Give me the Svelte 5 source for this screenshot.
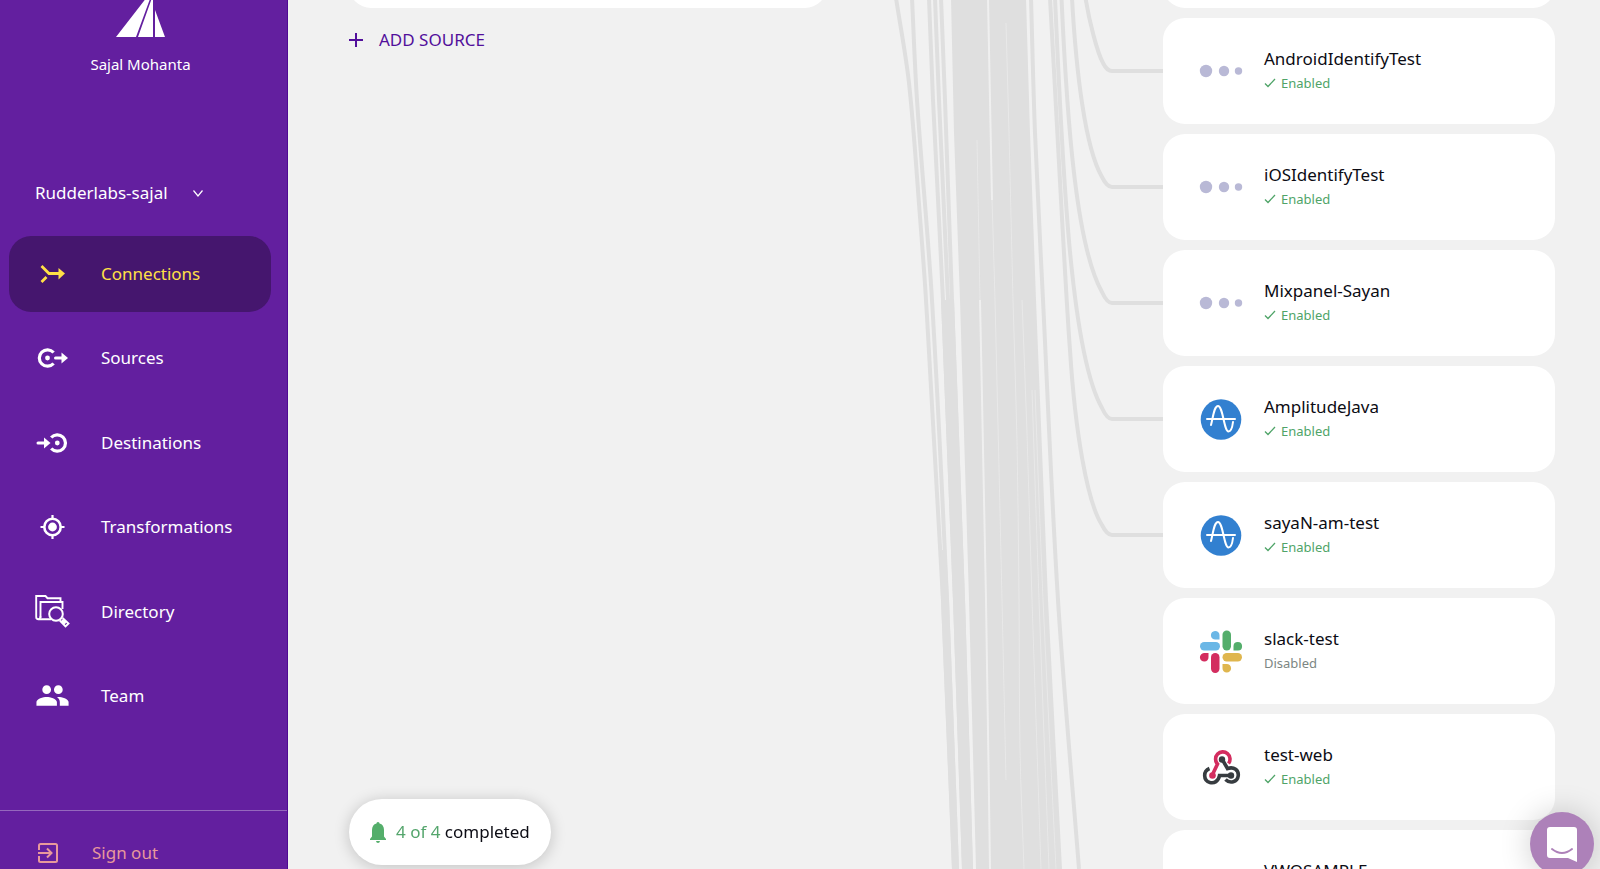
<script>
	let workspaces = ['Rudderlabs-sajal'];
	let workspace = workspaces[0];
	let active = 'Connections';

	const navItems = ['Connections', 'Sources', 'Destinations', 'Transformations', 'Directory', 'Team'];

	const destinations = [
		{ name: 'AndroidIdentifyTest', type: 'dots', enabled: true },
		{ name: 'iOSIdentifyTest', type: 'dots', enabled: true },
		{ name: 'Mixpanel-Sayan', type: 'dots', enabled: true },
		{ name: 'AmplitudeJava', type: 'amplitude', enabled: true },
		{ name: 'sayaN-am-test', type: 'amplitude', enabled: true },
		{ name: 'slack-test', type: 'slack', enabled: false },
		{ name: 'test-web', type: 'webhook', enabled: true },
		{ name: 'VWOSAMPLE', type: 'dots', enabled: true }
	];

	// connectors that end at a card in view
	const links = [
		'M258.5 -2C262 20 270 52 276 63Q280 71 285 71H336',
		'M245 -2C249 70 258 148 275 177Q280 187 285 187H336',
		'M234.5 -2C240 120 249 246 275 292Q280 303 285 303H336',
		'M228 -2C235 150 242 350 275 408Q280 419 285 419H336',
		'M223 -2C232 160 239 300 243 350C248 430 260 502 275 525Q280 535 285 535H336'
	];

	// connectors running on below the view, as [x, y] points
	const strands = [
		[[69, -2], [82, 83], [93, 217], [99, 300], [116, 600], [127, 869]],
		[[85, -2], [90, 100], [105, 300], [120, 600], [130, 869]],
		[[102, -2], [106, 100], [116, 300], [128, 600], [137, 869]],
		[[108, -2], [112, 100], [121, 300], [132, 600], [141, 869]],
		[[114, -2], [118, 100], [125, 300], [136, 600], [144, 869]],
		[[204, -2], [208, 133], [216, 300], [231, 600], [252, 869]]
	];

	const bundles = [
		[
			[124, -2], [127, 133], [133, 300], [142, 600], [149, 869],
			[235, 869], [221, 600], [209, 300], [203, 133], [199, -2]
		],
		[[114, 300], [126, 600], [135, 869], [146, 869], [138, 600], [127, 300]],
		[[113, 550], [114, 600], [125, 869], [132, 869], [122, 600], [119, 550]]
	];

	const gaps = [
		{ width: 2, points: [[161, -2], [163, 100], [165, 200]] },
		{ width: 1, points: [[165, 200], [168, 300], [175, 600], [179, 780]] },
		{ width: 1, points: [[150, 140], [153, 300]] },
		{ width: 2, points: [[153, 300], [159, 600], [163, 869]] },
		{ width: 1, points: [[179, 23], [182, 133], [186, 300], [190, 440], [192, 600], [193, 750], [197, 869]] },
		{ width: 1, points: [[195, 300], [200, 433], [205, 600], [214, 869]] },
		{ width: 1, points: [[205, 390], [212, 600], [222, 869]] },
		{ width: 1, points: [[208, 390], [216, 600], [229, 869]] }
	];

	const toPoints = (list) => list.map((p) => p.join(',')).join(' ');

	// smooth curve through every point
	function toCurve(list) {
		let d = `M${list[0].join(' ')}`;
		for (let i = 0; i < list.length - 1; i++) {
			const [x1, y1] = list[i];
			const [x2, y2] = list[i + 1];
			const before = list[i - 1] || list[i];
			const after = list[i + 2] || list[i + 1];
			const third = (y2 - y1) / 3;
			const slope1 = (x2 - before[0]) / (y2 - before[1]);
			const slope2 = (after[0] - x1) / (after[1] - y1);
			d += `C${x1 + slope1 * third} ${y1 + third} ${x2 - slope2 * third} ${y2 - third} ${x2} ${y2}`;
		}
		return d;
	}
</script>

<div class="app">
	<aside class="sidebar">
		<div class="profile">
			<svg class="logo" width="50" height="60" viewBox="0 0 50 60" fill="#fff" aria-hidden="true">
				<path d="M0 60L38 11L20 60zM22 60L37 18V60zM39 33L49 60H39z" />
			</svg>
			<span class="user">Sajal Mohanta</span>
		</div>

		<label class="workspace">
			<select bind:value={workspace} aria-label="Workspace">
				{#each workspaces as name}
					<option>{name}</option>
				{/each}
			</select>
			<svg width="10" height="8" viewBox="0 0 10 8" fill="none" stroke="#fff" stroke-width="1.2" aria-hidden="true">
				<path d="M.5 1.5L5 7L9.500 1.5" />
			</svg>
		</label>

		<nav>
			{#each navItems as item}
				<a
					href="#{item.toLowerCase()}"
					class="nav-item"
					class:active={item === active}
					on:click|preventDefault={() => (active = item)}
				>
					<svg width="34" height="34" viewBox="0 0 34 34" fill="none" stroke="currentColor" aria-hidden="true">
						{#if item === 'Connections'}
							<path d="M6.5 9L14 16.5H25M6.5 25L11.5 20" stroke-width="2.8" />
							<path d="M23.500 11L30 16.500L23.500 22.500z" fill="currentColor" stroke="none" />
						{:else if item === 'Sources'}
							<path d="M18.600 11.500A8.200 8.200 0 1 0 18.600 22.500" stroke-width="3.2" />
							<circle cx="12.5" cy="17" r="2.4" fill="currentColor" stroke="none" />
							<path d="M20.500 17H28" stroke-width="3" stroke-linecap="round" />
							<path d="M26.500 11.500L33 17L26.500 22.500z" fill="currentColor" stroke="none" />
						{:else if item === 'Destinations'}
							<path d="M16.200 11.500A8.200 8.200 0 1 1 16.200 22.500" stroke-width="3.2" />
							<circle cx="22.300" cy="17" r="2.4" fill="currentColor" stroke="none" />
							<path d="M3 17H10" stroke-width="3" stroke-linecap="round" />
							<path d="M9 11.500L15.500 17L9 22.500z" fill="currentColor" stroke="none" />
						{:else if item === 'Transformations'}
							<circle cx="17.5" cy="17" r="8.200" stroke-width="2.6" />
							<circle cx="17.5" cy="17" r="4.400" fill="currentColor" stroke="none" />
							<path d="M17.500 5V9M17.500 25V29M5.500 17H9.500M25.500 17H29.500" stroke-width="2.2" />
						{:else if item === 'Directory'}
							<path d="M25.500 6.500V3.200H12.500L10.500 1H1.200V22Q1.200 24.200 3.400 24.200H16" stroke-width="1.9" />
							<path d="M5.500 23V7H27.500V14" stroke-width="1.9" />
							<path d="M3.400 24.200Q5.500 24 5.500 21" stroke-width="1.6" />
							<circle cx="21" cy="19" r="6.800" stroke-width="2" />
							<path d="M24.800 25.500L30.500 31.500L33.500 28.500L27.600 23M27 25L30.500 28.500" stroke-width="1.9" />
						{:else}
							<g transform="translate(0 -1) scale(1.46)" fill="currentColor" stroke="none">
								<path d="M16 11c1.66 0 2.99-1.34 2.99-3S17.66 5 16 5s-3 1.34-3 3 1.34 3 3 3zm-8 0c1.66 0 2.99-1.34 2.99-3S9.66 5 8 5 5 6.34 5 8s1.340 3 3 3zm0 2c-2.33 0-7 1.17-7 3.500V19h14v-2.500c0-2.330-4.670-3.500-7-3.500zm8 0c-.29 0-.62.020-.97.050 1.160.840 1.970 1.970 1.970 3.450V19h6v-2.500c0-2.330-4.670-3.500-7-3.500z" />
							</g>
						{/if}
					</svg>
					<span>{item}</span>
				</a>
			{/each}
		</nav>

		<button class="sign-out">
			<svg width="20" height="20" viewBox="0 0 20 20" fill="none" stroke="currentColor" stroke-width="2" aria-hidden="true">
				<path d="M1 7V2.500Q1 1 2.500 1H17.500Q19 1 19 2.500V17.500Q19 19 17.500 19H2.500Q1 19 1 17.500V13" />
				<path d="M0 10H13M9 5.500L13.500 10L9 14.500" />
			</svg>
			<span>Sign out</span>
		</button>
	</aside>

	<main>
		<section class="sources">
			<div class="card"></div>
			<button class="add-source">
				<svg width="14" height="14" viewBox="0 0 14 14" stroke="currentColor" stroke-width="2" aria-hidden="true">
					<path d="M7 0V14M0 7H14" />
				</svg>
				<span>ADD SOURCE</span>
			</button>
		</section>

		<div class="links">
			<svg width="336" height="869" viewBox="0 0 336 869" fill="none" aria-hidden="true">
				<g stroke="#dfdfdf" stroke-width="4">
					{#each links as d}
						<path {d} />
					{/each}
					{#each strands as strand}
						<path d={toCurve(strand)} />
					{/each}
				</g>
				{#each bundles as bundle}
					<polygon points={toPoints(bundle)} fill="#dfdfdf" />
				{/each}
				{#each gaps as gap}
					<path d={toCurve(gap.points)} stroke="#f1f1f1" stroke-width={gap.width} opacity={gap.width === 1 ? 0.5 : 0.9} />
				{/each}
			</svg>
		</div>

		<section class="destinations">
			<div class="card"></div>
			{#each destinations as dest}
				<article class="card destination">
					<svg width="42" height="42" viewBox="0 0 42 42" fill="none" aria-hidden="true">
						{#if dest.type === 'dots'}
							<g fill="#b9b9d6">
								<circle cx="6" cy="21" r="6.200" />
								<circle cx="24" cy="21" r="5.200" />
								<circle cx="38.500" cy="21" r="3.700" />
							</g>
						{:else if dest.type === 'amplitude'}
							<circle cx="21" cy="21.500" r="20.300" fill="#3280d0" />
							<g stroke="#fff" stroke-width="2" stroke-linecap="round" stroke-linejoin="round">
								<path d="M7 21H35" />
								<path d="M11 27C13 20 14 8 18 8C23 8 24 33.500 28.500 33.500C31 33.500 32.500 28 33 24" />
							</g>
						{:else if dest.type === 'slack'}
							<g fill="#6bb7e6">
								<rect x="0" y="12" width="20" height="8.500" rx="4.200" />
								<path d="M19.500 9.500H15.500A4.300 4.300 0 1 1 19.500 5z" />
							</g>
							<g fill="#54ae6b">
								<rect x="22.500" y="0.500" width="8.500" height="20" rx="4.200" />
								<path d="M33.500 20.500V16A4.300 4.300 0 1 1 38 20.500z" />
							</g>
							<g fill="#dfb64e">
								<rect x="22.500" y="23" width="19.500" height="8.500" rx="4.200" />
								<path d="M22.500 34H26.500A4.300 4.300 0 1 1 22.500 38z" />
							</g>
							<g fill="#d32d5f">
								<rect x="11" y="23" width="8.500" height="20" rx="4.200" />
								<path d="M8.500 23V27A4.300 4.300 0 1 1 4 23z" />
							</g>
						{:else}
							<g stroke-width="3.600">
								<path d="M28.500 17.500A7.200 7.200 0 1 0 17.500 18L12.500 28.500" stroke="#d32d5f" />
								<path d="M22 13L27.500 22.500C34 20.500 39 24 38.200 30C37.300 36 30 38 25.500 33.500" stroke="#373c40" />
								<path d="M31 29.500H19.500C18.500 35.500 14 37.500 10 36.500C3 34.500 3 25 9.500 22.500" stroke="#373c40" />
							</g>
							<circle cx="22" cy="13.500" r="3.200" fill="#373c40" />
							<circle cx="12.500" cy="29.500" r="3.300" fill="#d32d5f" />
							<circle cx="31" cy="29.500" r="3.200" fill="#373c40" />
						{/if}
					</svg>
					<div class="details">
						<span class="name">{dest.name}</span>
						{#if dest.enabled}
							<span class="status enabled">
								<svg width="12" height="10" viewBox="0 0 12 10" fill="none" stroke="currentColor" stroke-width="1.300" aria-hidden="true">
									<path d="M1 5.500L4 8.500L11 1" />
								</svg>
								Enabled
							</span>
						{:else}
							<span class="status">Disabled</span>
						{/if}
					</div>
				</article>
			{/each}
		</section>
	</main>

	<button class="progress">
		<svg width="16" height="21" viewBox="0 0 16 21" fill="#54ae6b" aria-hidden="true">
			<path d="M8 0C6.900 0 6.500 .8 6.500 1.600C3.500 2.300 2 5 2 8V14.500L0 17V18H16V17L14 14.500V8C14 5 12.500 2.300 9.500 1.600C9.500 .8 9.100 0 8 0zM6 19H10Q9.700 21 8 21Q6.300 21 6 19z" />
		</svg>
		<span><em>4 of 4</em> completed</span>
	</button>

	<button class="chat" aria-label="Open chat">
		<svg width="30" height="35" viewBox="0 0 30 35" aria-hidden="true">
			<path d="M3 0H27Q30 0 30 3V35L21 31H3Q0 31 0 28V3Q0 0 3 0z" fill="#fff" />
			<path d="M5 22Q15 30 25 22" fill="none" stroke="#ad81b9" stroke-width="2" stroke-linecap="round" />
		</svg>
	</button>
</div>

<style>
	:global(body) {
		margin: 0;
		background: #f1f1f1;
	}

	.app {
		display: flex;
		height: 100vh;
		overflow: hidden;
		font-family: 'Noto Sans', sans-serif;
		font-size: 17px;
		line-height: 24px;
		color: #0c0c14;
	}

	button,
	select {
		border: 0;
		margin: 0;
		padding: 0;
		background: none;
		color: inherit;
		font: inherit;
		cursor: pointer;
	}

	svg {
		flex: none;
		overflow: visible;
	}

	.sidebar {
		box-sizing: border-box;
		display: flex;
		flex-direction: column;
		flex: none;
		width: 288px;
		background: #631f9f;
		border-right: 1px solid #4f0a93;
		color: #fff;
	}

	.profile {
		display: flex;
		flex-direction: column;
		align-items: center;
		gap: 15px;
		margin-top: -23px;
		padding-right: 6px;
	}

	.user {
		font-size: 15px;
	}

	.workspace {
		display: flex;
		align-items: center;
		gap: 25px;
		margin: 105px 35px 31px;
	}

	.workspace select {
		appearance: none;
		height: 24px;
	}

	.workspace option {
		color: #0c0c14;
	}

	nav {
		display: flex;
		flex: 1;
		flex-direction: column;
		justify-content: space-between;
		padding: 0 16px 76px 9px;
	}

	.nav-item {
		display: flex;
		align-items: center;
		gap: 32px;
		height: 76px;
		padding-left: 26px;
		border-radius: 22px;
		color: #fff;
		text-decoration: none;
	}

	.nav-item.active {
		background: #45166e;
		color: #ffe046;
	}

	.sign-out {
		display: flex;
		align-items: center;
		gap: 34px;
		height: 59px;
		padding: 26px 38px 0;
		box-sizing: border-box;
		border-top: 1px solid #9568bd;
		color: #e8999b;
	}

	main {
		display: grid;
		flex: 1;
		grid-template-columns: 478px 1fr 392px;
		padding: 0 45px 0 61px;
	}

	.card {
		box-sizing: border-box;
		flex: none;
		height: 106px;
		border-radius: 22px;
		background: #fff;
	}

	.sources,
	.destinations {
		margin-top: -98px;
	}

	.add-source {
		display: flex;
		align-items: center;
		gap: 16px;
		margin-top: 20px;
		color: #520f9b;
	}

	.links {
		display: flex;
		justify-content: flex-end;
	}

	.destinations {
		display: flex;
		flex-direction: column;
		gap: 10px;
	}

	.destination {
		display: flex;
		align-items: center;
		gap: 22px;
		padding-left: 37px;
	}

	.details {
		display: flex;
		flex-direction: column;
	}

	.status {
		display: flex;
		align-items: center;
		gap: 5px;
		color: #7c8683;
		font-size: 13px;
	}

	.status.enabled {
		color: #4fa468;
	}

	.progress {
		position: fixed;
		left: 349px;
		bottom: 4px;
		display: flex;
		align-items: center;
		gap: 10px;
		height: 66px;
		padding: 0 21px;
		border-radius: 33px;
		background: #fff;
		box-shadow: 0 2px 16px rgba(0, 0, 0, 0.2);
	}

	.progress em {
		color: #54a56c;
		font-style: normal;
	}

	.chat {
		position: fixed;
		right: 6px;
		bottom: -7px;
		display: flex;
		align-items: center;
		justify-content: center;
		width: 64px;
		height: 64px;
		border-radius: 50%;
		background: #ad81b9;
		box-shadow: 0 1px 32px rgba(0, 0, 0, 0.2);
	}
</style>
